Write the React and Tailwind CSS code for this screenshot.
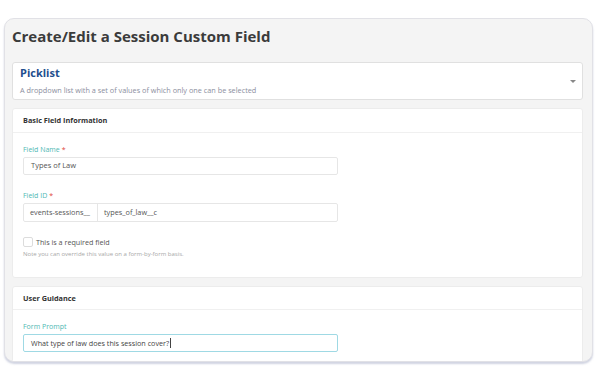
export default function App() {
  return (
    <div className="h-[384px] w-[596px] bg-white pt-[18px] pl-[4px] font-['Open_Sans',sans-serif]">
      <div className="h-[344px] w-[589px] overflow-hidden rounded-[10px] border border-[#e1e1e6] bg-[#f4f4f4] shadow-[0_2px_2px_rgba(170,175,200,0.55)]">
        <h1 className="px-[7px] pt-[6px] text-[15px] leading-[22px] font-bold text-[#3b3b3b]">
          Create/Edit a Session Custom Field
        </h1>

        <div className="mt-[15px] flex flex-col gap-[8px] pr-[9px] pl-[7px]">
          <div className="relative h-[38px] rounded-[3px] border border-[#e0e0e0] bg-white px-[7px]">
            <div className="pt-[2px] text-[11px] leading-[16px] font-bold text-[#1f4f8e]">Picklist</div>
            <div className="mt-[4px] text-[7.3px] leading-[10px] text-[#8b8e9e]">
              A dropdown list with a set of values of which only one can be selected
            </div>
            <div className="absolute top-[17px] right-[6px] h-0 w-0 border-x-[3px] border-t-[3px] border-x-transparent border-t-[#888]" />
          </div>

          <div className="h-[170px] rounded-[3px] border border-[#ececec] bg-white">
            <div className="flex h-[24px] items-center border-b border-[#f0f0f0] px-[10px] text-[7.3px] font-bold text-[#333]">
              Basic Field Information
            </div>
            <div className="px-[10px] pt-[12px]">
              <Label text="Field Name" required />
              <div className="mt-[2px] flex h-[18px] w-[315px] items-center rounded-[2px] border border-[#e6e6e6] px-[7px] text-[7.5px] text-[#555]">
                Types of Law
              </div>

              <div className="mt-[16px]">
                <Label text="Field ID" required />
              </div>
              <div className="mt-[2px] flex h-[19px] w-[315px] rounded-[2px] border border-[#e6e6e6] text-[7.3px] text-[#555]">
                <div className="flex w-[74px] items-center border-r border-[#e6e6e6] px-[6px] whitespace-nowrap">events-sessions__</div>
                <div className="flex items-center px-[6px]">types_of_law__c</div>
              </div>

              <div className="mt-[15px] flex items-center gap-[3px]">
                <div className="h-[10px] w-[10px] rounded-[2px] border border-[#dcdcdc]" />
                <span className="text-[7.2px] leading-[10px] text-[#555]">This is a required field</span>
              </div>
              <div className="mt-[3px] text-[6px] leading-[8px] text-[#a8a8a8]">
                Note you can override this value on a form-by-form basis.
              </div>
            </div>
          </div>

          <div className="h-[80px] rounded-[3px] border border-[#ececec] bg-white">
            <div className="flex h-[23px] items-center border-b border-[#f0f0f0] px-[10px] text-[7.3px] font-bold text-[#333]">
              User Guidance
            </div>
            <div className="px-[10px] pt-[12px]">
              <Label text="Form Prompt" />
              <div className="mt-[2px] flex h-[18px] w-[315px] items-center rounded-[2px] border border-[#9fd9e4] px-[7px] text-[7.2px] text-[#444]">
                What type of law does this session cover?
                <span className="ml-[1px] h-[10px] w-px bg-[#444]" />
              </div>
            </div>
          </div>
        </div>
      </div>
    </div>
  );
}

function Label({ text, required }) {
  return (
    <div className="text-[7px] leading-[10px] text-[#4fb8b3]">
      {text}
      {required && <span className="ml-[2px] text-[#e0453a]">*</span>}
    </div>
  );
}
